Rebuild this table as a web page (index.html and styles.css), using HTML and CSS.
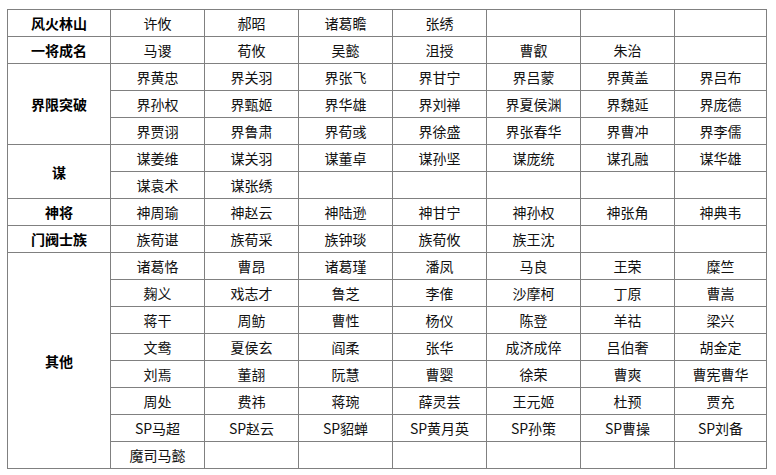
FILE: index.html
```html
<!DOCTYPE html>
<html lang="zh-CN">
<head>
<meta charset="utf-8">
<title>武将列表</title>
<link rel="stylesheet" href="styles.css">
</head>
<body>
<table class="roster">
  <colgroup>
    <col class="c-cat"><col class="c-n"><col class="c-n"><col class="c-n"><col class="c-n"><col class="c-n"><col class="c-n"><col class="c-last">
  </colgroup>
  <tbody>
    <tr><th>风火林山</th><td>许攸</td><td>郝昭</td><td>诸葛瞻</td><td>张绣</td><td></td><td></td><td></td></tr>
    <tr><th>一将成名</th><td>马谡</td><td>荀攸</td><td>吴懿</td><td>沮授</td><td>曹叡</td><td>朱治</td><td></td></tr>
    <tr><th rowspan="3">界限突破</th><td>界黄忠</td><td>界关羽</td><td>界张飞</td><td>界甘宁</td><td>界吕蒙</td><td>界黄盖</td><td>界吕布</td></tr>
    <tr><td>界孙权</td><td>界甄姬</td><td>界华雄</td><td>界刘禅</td><td>界夏侯渊</td><td>界魏延</td><td>界庞德</td></tr>
    <tr><td>界贾诩</td><td>界鲁肃</td><td>界荀彧</td><td>界徐盛</td><td>界张春华</td><td>界曹冲</td><td>界李儒</td></tr>
    <tr><th rowspan="2">谋</th><td>谋姜维</td><td>谋关羽</td><td>谋董卓</td><td>谋孙坚</td><td>谋庞统</td><td>谋孔融</td><td>谋华雄</td></tr>
    <tr><td>谋袁术</td><td>谋张绣</td><td></td><td></td><td></td><td></td><td></td></tr>
    <tr><th>神将</th><td>神周瑜</td><td>神赵云</td><td>神陆逊</td><td>神甘宁</td><td>神孙权</td><td>神张角</td><td>神典韦</td></tr>
    <tr><th>门阀士族</th><td>族荀谌</td><td>族荀采</td><td>族钟琰</td><td>族荀攸</td><td>族王沈</td><td></td><td></td></tr>
    <tr><th rowspan="8">其他</th><td>诸葛恪</td><td>曹昂</td><td>诸葛瑾</td><td>潘凤</td><td>马良</td><td>王荣</td><td>糜竺</td></tr>
    <tr><td>麹义</td><td>戏志才</td><td>鲁芝</td><td>李傕</td><td>沙摩柯</td><td>丁原</td><td>曹嵩</td></tr>
    <tr><td>蒋干</td><td>周鲂</td><td>曹性</td><td>杨仪</td><td>陈登</td><td>羊祜</td><td>梁兴</td></tr>
    <tr><td>文鸯</td><td>夏侯玄</td><td>阎柔</td><td>张华</td><td>成济成倅</td><td>吕伯奢</td><td>胡金定</td></tr>
    <tr><td>刘焉</td><td>董翓</td><td>阮慧</td><td>曹婴</td><td>徐荣</td><td>曹爽</td><td>曹宪曹华</td></tr>
    <tr><td>周处</td><td>费祎</td><td>蒋琬</td><td>薛灵芸</td><td>王元姬</td><td>杜预</td><td>贾充</td></tr>
    <tr><td>SP马超</td><td>SP赵云</td><td>SP貂蝉</td><td>SP黄月英</td><td>SP孙策</td><td>SP曹操</td><td>SP刘备</td></tr>
    <tr><td>魔司马懿</td><td></td><td></td><td></td><td></td><td></td><td></td></tr>
  </tbody>
</table>
</body>
</html>
```

FILE: styles.css
```css
html, body {
  margin: 0;
  background: #ffffff;
}
body {
  padding: 9px 0 0 7px;
  font-family: "Noto Sans CJK SC", "Noto Sans", "Liberation Sans", sans-serif;
  font-size: 14px;
  color: #111111;
}
.roster {
  border-collapse: collapse;
  table-layout: fixed;
  width: 759px;
}
.c-cat { width: 103px; }
.c-n { width: 94px; }
.c-last { width: 92px; }
.roster th,
.roster td {
  border: 1px solid #808080;
  height: 26px;
  padding: 0;
  text-align: center;
  vertical-align: middle;
  line-height: 16px;
  white-space: nowrap;
}
.roster th {
  font-weight: bold;
  color: #000000;
}
```
